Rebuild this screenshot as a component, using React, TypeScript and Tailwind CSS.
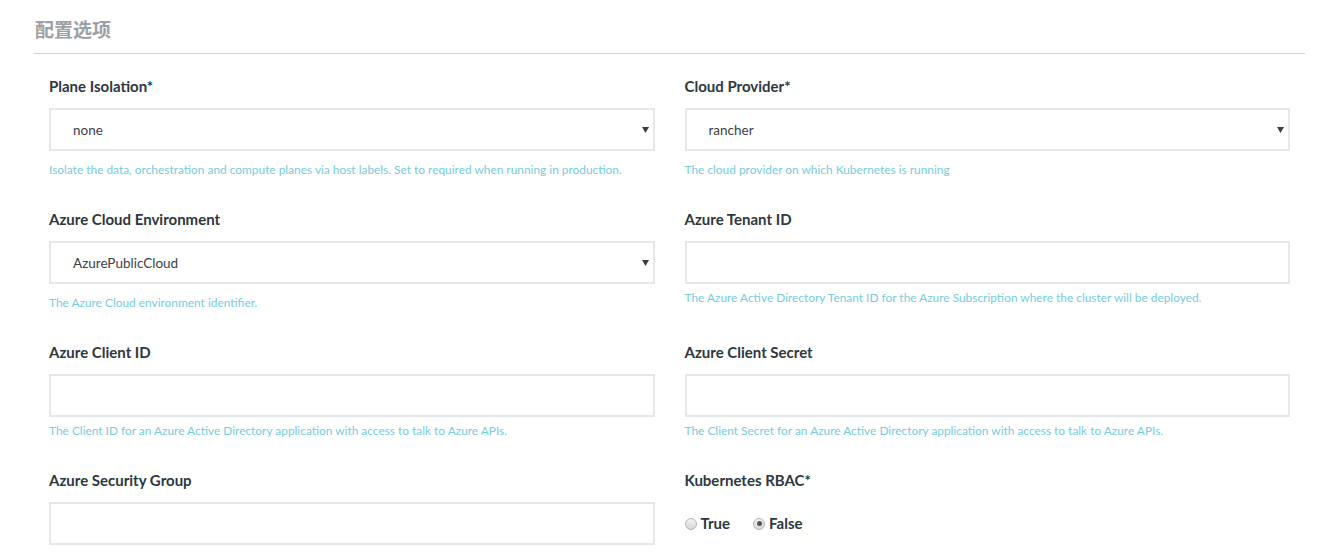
import type {ReactNode} from 'react';

const font = {fontFamily: 'Lato, "Noto Sans CJK SC", sans-serif'};

function Label({children}: {children: ReactNode}) {
  return (
    <div className="h-5 text-[15px] leading-5 font-bold text-[#2d3740]">
      {children}
    </div>
  );
}

function Help({children, select}: {children: ReactNode; select?: boolean}) {
  return (
    <p
      className={`${select ? 'mt-[11px]' : 'mt-[6px]'} text-[11.9px] leading-4 text-[#75cddd]`}
    >
      {children}
    </p>
  );
}

function SelectBox({value}: {value: string}) {
  return (
    <div className="flex h-[43px] items-center justify-between border-2 border-[#e4e8e8] bg-white pl-[22px] pr-[4px]">
      <span className="pt-px text-[13.5px] text-[#3b4046]">{value}</span>
      <svg width="7" height="6" viewBox="0 0 7 6">
        <path d="M0 0h7L3.5 6z" fill="#3a3f46" />
      </svg>
    </div>
  );
}

function TextBox() {
  return <div className="h-[43px] border-2 border-[#e4e8e8] bg-white" />;
}

function Field({
  label,
  help,
  select,
}: {
  label: string;
  help?: string;
  select?: string;
}) {
  return (
    <div className="flex flex-col">
      <Label>{label}</Label>
      <div className="mt-3">
        {select !== undefined ? <SelectBox value={select} /> : <TextBox />}
      </div>
      {help && <Help select={select !== undefined}>{help}</Help>}
    </div>
  );
}

function Radio({checked, label}: {checked?: boolean; label: string}) {
  return (
    <label className="flex items-center gap-[4px]">
      <span className="flex h-[12px] w-[12px] items-center justify-center rounded-full border border-[#b5b5b5] bg-gradient-to-b from-[#f4f4f4] to-[#d6d6d6]">
        {checked && <span className="h-[5px] w-[5px] rounded-full bg-[#555]" />}
      </span>
      <span className="text-[15px] font-bold text-[#2d3740]">{label}</span>
    </label>
  );
}

export default function App() {
  return (
    <div className="min-h-[552px] bg-white pl-[34px] pr-[30px] pt-[18px]" style={font}>
      <div className="border-b border-[#d0d6d6] pb-[11px]">
        <h2 className="pl-px text-[19px] leading-6 font-bold text-[#9aa1a6]">
          配置选项
        </h2>
      </div>

      <div className="grid grid-cols-2 gap-x-[30px] gap-y-[31px] px-[15px] pt-[22px]">
        <Field
          label="Plane Isolation*"
          select="none"
          help="Isolate the data, orchestration and compute planes via host labels. Set to required when running in production."
        />
        <Field
          label="Cloud Provider*"
          select="rancher"
          help="The cloud provider on which Kubernetes is running"
        />
        <Field
          label="Azure Cloud Environment"
          select="AzurePublicCloud"
          help="The Azure Cloud environment identifier."
        />
        <Field
          label="Azure Tenant ID"
          help="The Azure Active Directory Tenant ID for the Azure Subscription where the cluster will be deployed."
        />
        <Field
          label="Azure Client ID"
          help="The Client ID for an Azure Active Directory application with access to talk to Azure APIs."
        />
        <Field
          label="Azure Client Secret"
          help="The Client Secret for an Azure Active Directory application with access to talk to Azure APIs."
        />
        <Field label="Azure Security Group" />
        <div className="flex flex-col">
          <Label>Kubernetes RBAC*</Label>
          <div className="mt-3 flex h-[43px] items-center gap-[23px]">
            <Radio label="True" />
            <Radio label="False" checked />
          </div>
        </div>
      </div>
    </div>
  );
}
